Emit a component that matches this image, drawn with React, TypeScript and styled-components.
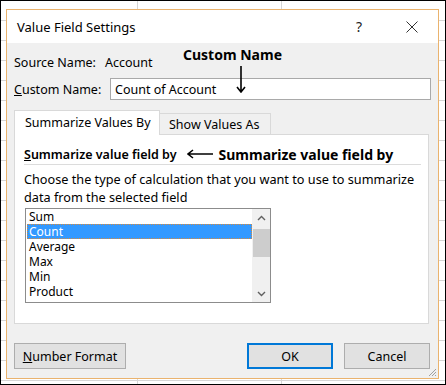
import React, { FC } from 'react';
import styled, { createGlobalStyle } from 'styled-components';

const GlobalStyle = createGlobalStyle`
  body {
    margin: 0;
    font-family: 'Noto Sans', 'Open Sans', sans-serif;
    color: #000;
  }
`;

const Frame = styled.div`
  width: 446px;
  height: 385px;
  box-sizing: border-box;
  border: 1px solid #000;
  padding: 8px 0 0 5px;
  background-color: #fff;
  background-image: linear-gradient(to right, transparent 136px, #d6d6d6 136px, #d6d6d6 137px, transparent 137px),
    linear-gradient(to right, transparent 280px, #d6d6d6 280px, #d6d6d6 281px, transparent 281px),
    repeating-linear-gradient(to bottom, transparent 0 19px, #d6d6d6 19px 20px);
`;

const Dialog = styled.div`
  position: relative;
  width: 433px;
  height: 370px;
  box-sizing: border-box;
  border: 1px solid #eab36e;
  background: #f0f0f0;
  display: flex;
  flex-direction: column;
  font-size: 12.5px;
`;

const TitleBar = styled.div`
  height: 33px;
  flex: none;
  background: #fff;
  display: flex;
  align-items: center;
  padding-left: 10px;
  font-size: 13px;
`;

const Title = styled.div`
  flex: 1;
`;

const TitleButton = styled.div<{ $width: number; $right: number }>`
  width: ${(p) => p.$width}px;
  margin-right: ${(p) => p.$right}px;
  height: 100%;
  display: flex;
  align-items: center;
  justify-content: center;
  font-size: 14px;
  color: #222;
`;

const Body = styled.div`
  flex: 1;
  display: flex;
  flex-direction: column;
  padding: 8px 7px 9px 7px;
`;

const FieldRow = styled.div`
  display: flex;
  align-items: center;
  height: 22px;
  & + & {
    margin-top: 5px;
  }
`;

const Label = styled.div<{ $width: number }>`
  width: ${(p) => p.$width}px;
  flex: none;
`;

const TextInput = styled.div`
  flex: 1;
  height: 22px;
  box-sizing: border-box;
  border: 1px solid #a9a9a9;
  background: #fff;
  display: flex;
  align-items: center;
  padding-left: 4px;
`;

const Note = styled.div`
  font-weight: 700;
  font-size: 14px;
  color: #000;
  white-space: nowrap;
`;

const NameNote = styled.div`
  position: absolute;
  left: 176px;
  top: 35px;
  display: flex;
  flex-direction: column;
  align-items: flex-start;
`;

const NoteArrow = styled.svg`
  margin-left: 53px;
  margin-top: 2px;
`;

const TabStrip = styled.div`
  margin-top: 10px;
  display: flex;
  align-items: flex-end;
  height: 24px;
  position: relative;
  z-index: 1;
`;

const Tab = styled.div<{ $active?: boolean; $width: number }>`
  width: ${(p) => p.$width}px;
  height: ${(p) => (p.$active ? 25 : 21)}px;
  margin-bottom: ${(p) => (p.$active ? -1 : 0)}px;
  box-sizing: border-box;
  border: 1px solid #d9d9d9;
  border-left-width: ${(p) => (p.$active ? 1 : 0)}px;
  border-bottom: none;
  background: ${(p) => (p.$active ? '#fff' : '#f0f0f0')};
  display: flex;
  align-items: center;
  padding-left: ${(p) => (p.$active ? 10 : 9)}px;
  padding-bottom: ${(p) => (p.$active ? 1 : 0)}px;
  white-space: nowrap;
`;

const Panel = styled.div`
  width: 415px;
  height: 190px;
  box-sizing: border-box;
  border: 1px solid #d9d9d9;
  background: #fff;
  padding: 10px 7px 0 9px;
`;

const HeadingRow = styled.div`
  display: flex;
  align-items: center;
  height: 18px;
`;

const Heading = styled.div`
  font-weight: 600;
  white-space: nowrap;
`;

const SideArrow = styled.svg`
  margin: 0 6px 0 10px;
  flex: none;
`;

const Rule = styled.div`
  height: 1px;
  background: #dcdcdc;
  margin-top: 1px;
`;

const Description = styled.div`
  margin-top: 5px;
  font-size: 12.7px;
  line-height: 18px;
  white-space: nowrap;
`;

const ListBox = styled.div`
  margin: 2px 0 0 1px;
  width: 246px;
  height: 95px;
  box-sizing: border-box;
  border: 1px solid #8c8c8c;
  background: #fff;
  display: flex;
`;

const Items = styled.div`
  flex: 1;
  font-size: 12px;
`;

const Item = styled.div<{ $selected?: boolean }>`
  height: 15px;
  line-height: 15px;
  margin-left: 1px;
  padding-left: 2px;
  box-sizing: border-box;
  overflow: hidden;
  background: ${(p) => (p.$selected ? '#3399ff' : 'transparent')};
  color: ${(p) => (p.$selected ? '#fff' : '#000')};
  outline: ${(p) => (p.$selected ? '1px dotted #d98a3a' : 'none')};
  outline-offset: -1px;
`;

const ScrollBar = styled.div`
  width: 18px;
  background: #f0f0f0;
  display: flex;
  flex-direction: column;
  align-items: center;
`;

const ScrollArrow = styled.div`
  height: 17px;
  width: 100%;
  display: flex;
  align-items: center;
  justify-content: center;
`;

const Thumb = styled.div`
  margin-top: 3px;
  width: 17px;
  height: 28px;
  background: #cdcdcd;
`;

const Spacer = styled.div`
  flex: 1;
`;

const ButtonRow = styled.div`
  margin-top: auto;
  display: flex;
  align-items: center;
  padding-right: 1px;
`;

const Button = styled.div<{ $width: number; $primary?: boolean }>`
  width: ${(p) => p.$width}px;
  height: 26px;
  box-sizing: border-box;
  border: ${(p) => (p.$primary ? '2px solid #0078d7' : '1px solid #adadad')};
  background: #e1e1e1;
  display: flex;
  align-items: center;
  justify-content: center;
  & + & {
    margin-left: 11px;
  }
`;

const Grip = styled.svg`
  position: absolute;
  right: 1px;
  bottom: 1px;
`;

const Chevron: FC<{ up?: boolean }> = ({ up }) => (
  <svg width='9' height='6' viewBox='0 0 9 6'>
    <path
      d={up ? 'M1 5 L4.5 1.5 L8 5' : 'M1 1 L4.5 4.5 L8 1'}
      fill='none'
      stroke='#606060'
      strokeWidth='1.4'
    />
  </svg>
);

const items = ['Sum', 'Count', 'Average', 'Max', 'Min', 'Product'];

const App: FC = () => {
  return (
    <Frame>
      <GlobalStyle />
      <Dialog>
        <TitleBar>
          <Title>Value Field Settings</Title>
          <TitleButton $width={30} $right={18}>?</TitleButton>
          <TitleButton $width={40} $right={6}>
            <svg width='12' height='12' viewBox='0 0 12 12'>
              <path d='M0.5 0.5 L11.5 11.5 M11.5 0.5 L0.5 11.5' stroke='#333' strokeWidth='1' />
            </svg>
          </TitleButton>
        </TitleBar>
        <Body>
          <FieldRow>
            <Label $width={91}>Source Name:</Label>
            <span>Account</span>
          </FieldRow>
          <FieldRow>
            <Label $width={96}>
              <u>C</u>ustom Name:
            </Label>
            <TextInput>Count of Account</TextInput>
          </FieldRow>

          <TabStrip>
            <Tab $active $width={146}>
              Summarize Values By
            </Tab>
            <Tab $width={111}>Show Values As</Tab>
          </TabStrip>
          <Panel>
            <HeadingRow>
              <Heading>
                <u>S</u>ummarize value field by
              </Heading>
              <SideArrow width='26' height='10' viewBox='0 0 26 10'>
                <path d='M1 5 H26 M6 1 L1 5 L6 9' fill='none' stroke='#000' strokeWidth='1.6' />
              </SideArrow>
              <Note>Summarize value field by</Note>
            </HeadingRow>
            <Rule />
            <Description>
              Choose the type of calculation that you want to use to summarize
              <br />
              data from the selected field
            </Description>
            <ListBox>
              <Items>
                {items.map((name) => (
                  <Item key={name} $selected={name === 'Count'}>
                    {name}
                  </Item>
                ))}
              </Items>
              <ScrollBar>
                <ScrollArrow>
                  <Chevron up />
                </ScrollArrow>
                <Thumb />
                <Spacer />
                <ScrollArrow>
                  <Chevron />
                </ScrollArrow>
              </ScrollBar>
            </ListBox>
          </Panel>

          <ButtonRow>
            <Button $width={112}>
              <span>
                <u>N</u>umber Format
              </span>
            </Button>
            <Spacer />
            <Button $width={86} $primary>
              OK
            </Button>
            <Button $width={86}>Cancel</Button>
          </ButtonRow>
        </Body>

        <NameNote>
          <Note>Custom Name</Note>
          <NoteArrow width='10' height='27' viewBox='0 0 10 27'>
            <path d='M5 0 V26 M1 21 L5 26 L9 21' fill='none' stroke='#000' strokeWidth='1.6' />
          </NoteArrow>
        </NameNote>

        <Grip width='10' height='10' viewBox='0 0 10 10'>
          <path d='M9 2 L2 9 M9 5 L5 9 M9 8 L8 9' stroke='#a0a0a0' strokeWidth='1' />
        </Grip>
      </Dialog>
    </Frame>
  );
};

export default App;
